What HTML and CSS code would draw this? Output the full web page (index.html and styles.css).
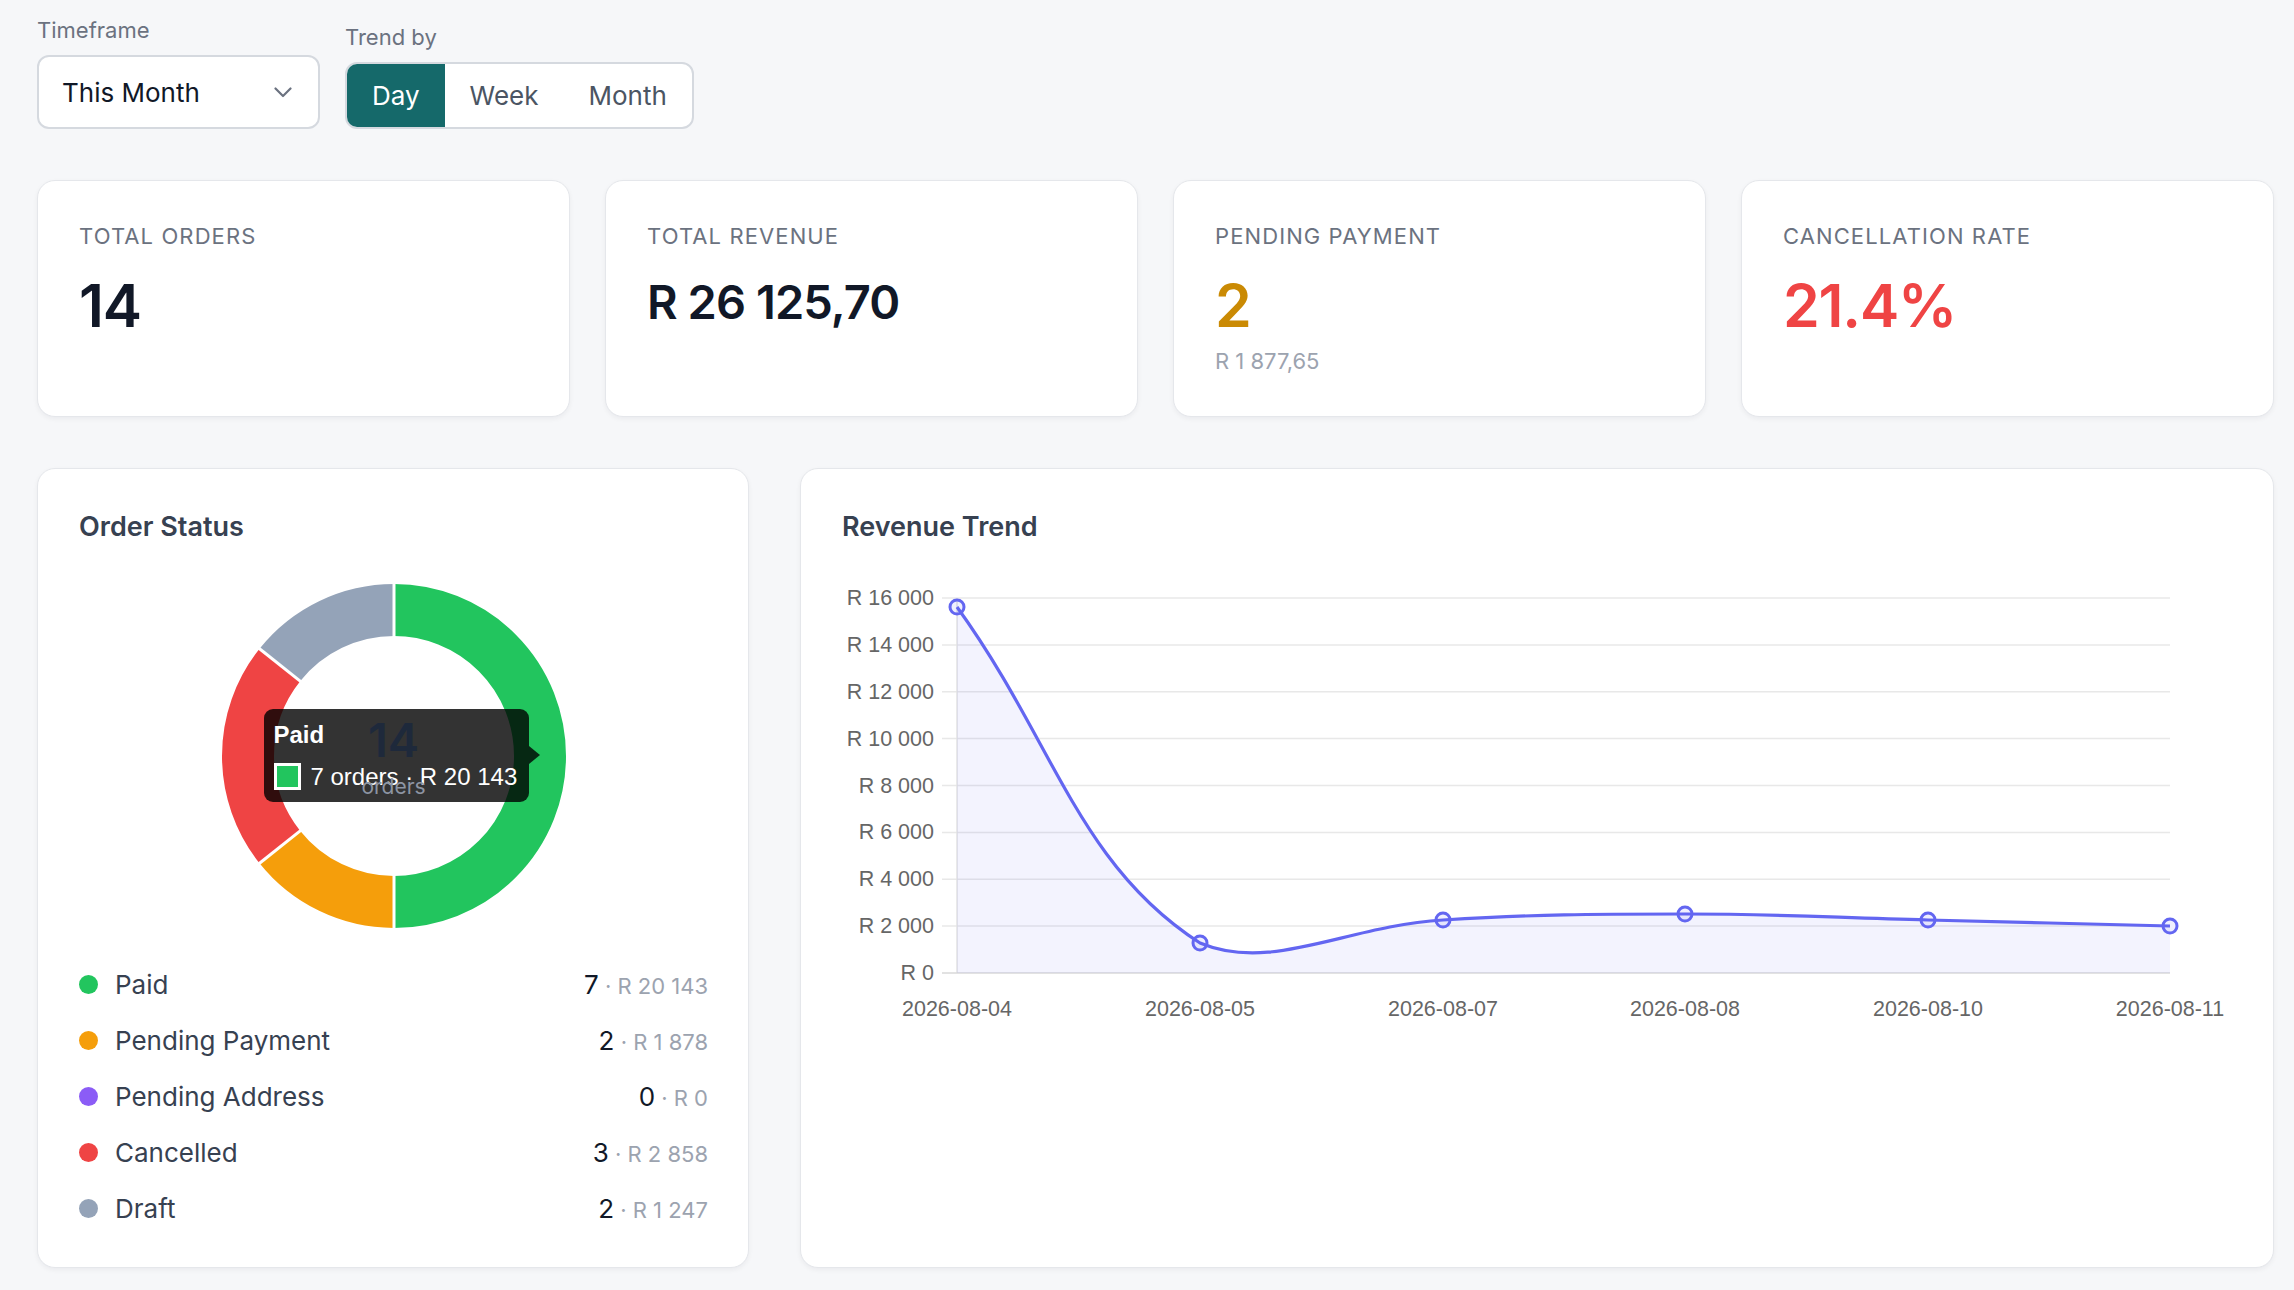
FILE: index.html
```html
<!DOCTYPE html>
<html lang="en">
<head>
    <meta charset="UTF-8">
    <meta name="viewport" content="width=device-width, initial-scale=1.0">
    <title>Orders Dashboard</title>
    <link rel="stylesheet" href="styles.css">
</head>
<body>
    <div class="page">
        <div class="toolbar">
            <div class="field">
                <span class="field-label">Timeframe</span>
                <div class="select">
                    <span>This Month</span>
                    <svg width="18" height="11" viewBox="0 0 18 11"><polyline points="1.5,1.5 9,9 16.5,1.5" fill="none" stroke="#6b7280" stroke-width="2.2" stroke-linecap="round" stroke-linejoin="round"/></svg>
                </div>
            </div>
            <div class="field">
                <span class="field-label">Trend by</span>
                <div class="seg">
                    <button class="active">Day</button>
                    <button>Week</button>
                    <button>Month</button>
                </div>
            </div>
        </div>

        <div class="stats">
            <div class="card stat">
                <div class="stat-label">Total Orders</div>
                <div class="stat-value">14</div>
            </div>
            <div class="card stat">
                <div class="stat-label">Total Revenue</div>
                <div class="stat-value money">R 26 125,70</div>
            </div>
            <div class="card stat">
                <div class="stat-label">Pending Payment</div>
                <div class="stat-value amber">2</div>
                <div class="stat-sub">R 1 877,65</div>
            </div>
            <div class="card stat">
                <div class="stat-label">Cancellation Rate</div>
                <div class="stat-value red">21.4%</div>
            </div>
        </div>

        <div class="panels">
            <div class="card panel">
                <h3>Order Status</h3>
                <div class="donut">
                    <svg width="344" height="344" viewBox="-172 -172 344 344">
                        <g transform="rotate(-90)" fill="none" stroke-width="52">
                            <circle r="146" stroke="#22c55e" stroke-dasharray="458.67 917.35" stroke-dashoffset="0"/>
                            <circle r="146" stroke="#f59e0b" stroke-dasharray="131.05 917.35" stroke-dashoffset="-458.67"/>
                            <circle r="146" stroke="#ef4444" stroke-dasharray="196.57 917.35" stroke-dashoffset="-589.72"/>
                            <circle r="146" stroke="#94a3b8" stroke-dasharray="131.05 917.35" stroke-dashoffset="-786.29"/>
                        </g>
                        <g stroke="#fff" stroke-width="3">
                            <line x1="0" y1="-118" x2="0" y2="-174"/>
                            <line x1="0" y1="118" x2="0" y2="174"/>
                            <line x1="-92.25" y1="73.57" x2="-136.03" y2="108.49"/>
                            <line x1="-92.25" y1="-73.57" x2="-136.03" y2="-108.49"/>
                        </g>
                    </svg>
                    <div class="tooltip">
                        <div class="tooltip-title">Paid</div>
                        <div class="tooltip-row"><span class="tooltip-swatch"></span>7 orders · R 20 143</div>
                    </div>
                    <div class="donut-center">
                        <div class="donut-total">14</div>
                        <div class="donut-caption">orders</div>
                    </div>
                </div>
                <div class="legend">
                    <div class="legend-row">
                        <span class="legend-name"><i class="dot" style="background:#22c55e"></i>Paid</span>
                        <span><b>7</b><small> · R 20 143</small></span>
                    </div>
                    <div class="legend-row">
                        <span class="legend-name"><i class="dot" style="background:#f59e0b"></i>Pending Payment</span>
                        <span><b>2</b><small> · R 1 878</small></span>
                    </div>
                    <div class="legend-row">
                        <span class="legend-name"><i class="dot" style="background:#8b5cf6"></i>Pending Address</span>
                        <span><b>0</b><small> · R 0</small></span>
                    </div>
                    <div class="legend-row">
                        <span class="legend-name"><i class="dot" style="background:#ef4444"></i>Cancelled</span>
                        <span><b>3</b><small> · R 2 858</small></span>
                    </div>
                    <div class="legend-row">
                        <span class="legend-name"><i class="dot" style="background:#94a3b8"></i>Draft</span>
                        <span><b>2</b><small> · R 1 247</small></span>
                    </div>
                </div>
            </div>

            <div class="card panel">
                <h3>Revenue Trend</h3>
                <svg class="trend" width="1390" height="470" viewBox="842 560 1390 470">
                    <g stroke="#e8e8e8" stroke-width="1.5">
                        <line x1="942" y1="598" x2="2170" y2="598"/>
                        <line x1="942" y1="644.9" x2="2170" y2="644.9"/>
                        <line x1="942" y1="691.8" x2="2170" y2="691.8"/>
                        <line x1="942" y1="738.6" x2="2170" y2="738.6"/>
                        <line x1="942" y1="785.5" x2="2170" y2="785.5"/>
                        <line x1="942" y1="832.4" x2="2170" y2="832.4"/>
                        <line x1="942" y1="879.3" x2="2170" y2="879.3"/>
                        <line x1="942" y1="926.1" x2="2170" y2="926.1"/>
                    </g>
                    <line x1="957" y1="598" x2="957" y2="973" stroke="#e2e2e2" stroke-width="1.5"/>
                    <line x1="942" y1="973" x2="2170" y2="973" stroke="#d9d9d9" stroke-width="1.5"/>
                    <path d="M957,607 C1054.2,741.4 1077.6,864.2 1200,943 C1272,973 1345.6,925.8 1443,920 C1539.6,914.2 1588.2,914 1685,914 C1782.2,914 1830.8,917.6 1928,920 C2024.8,922.4 2073.2,923.6 2170,926 L2170,973 L957,973 Z" fill="rgba(99,102,241,0.08)"/>
                    <path d="M957,607 C1054.2,741.4 1077.6,864.2 1200,943 C1272,973 1345.6,925.8 1443,920 C1539.6,914.2 1588.2,914 1685,914 C1782.2,914 1830.8,917.6 1928,920 C2024.8,922.4 2073.2,923.6 2170,926" fill="none" stroke="#6366f1" stroke-width="3.2"/>
                    <g fill="rgba(99,102,241,0.1)" stroke="#6366f1" stroke-width="3">
                        <circle cx="957" cy="607" r="7"/>
                        <circle cx="1200" cy="943" r="7"/>
                        <circle cx="1443" cy="920" r="7"/>
                        <circle cx="1685" cy="914" r="7"/>
                        <circle cx="1928" cy="920" r="7"/>
                        <circle cx="2170" cy="926" r="7"/>
                    </g>
                    <g class="axis-y" text-anchor="end">
                        <text x="934" y="598">R 16 000</text>
                        <text x="934" y="644.9">R 14 000</text>
                        <text x="934" y="691.8">R 12 000</text>
                        <text x="934" y="738.6">R 10 000</text>
                        <text x="934" y="785.5">R 8 000</text>
                        <text x="934" y="832.4">R 6 000</text>
                        <text x="934" y="879.3">R 4 000</text>
                        <text x="934" y="926.1">R 2 000</text>
                        <text x="934" y="973">R 0</text>
                    </g>
                    <g class="axis-x" text-anchor="middle">
                        <text x="957" y="1009">2026-08-04</text>
                        <text x="1200" y="1009">2026-08-05</text>
                        <text x="1443" y="1009">2026-08-07</text>
                        <text x="1685" y="1009">2026-08-08</text>
                        <text x="1928" y="1009">2026-08-10</text>
                        <text x="2170" y="1009">2026-08-11</text>
                    </g>
                </svg>
            </div>
        </div>
    </div>
</body>
</html>
```

FILE: styles.css
```css
* {
    box-sizing: border-box;
}
body {
    margin: 0;
    background: #f6f7f9;
    font-family: 'Inter', 'Noto Sans', sans-serif;
    color: #111827;
}
.page {
    padding: 15px 20px 40px 37px;
}
.toolbar {
    display: flex;
    align-items: flex-end;
    gap: 25px;
}
.field {
    display: flex;
    flex-direction: column;
}
.field-label {
    font-size: 22px;
    line-height: 30px;
    color: #6b7280;
    margin-bottom: 10px;
}
.select {
    width: 283px;
    height: 74px;
    background: #fff;
    border: 2px solid #d5d9df;
    border-radius: 12px;
    padding: 0 26px 0 23px;
    display: flex;
    align-items: center;
    justify-content: space-between;
    font-size: 26px;
    color: #111827;
}
.seg {
    display: flex;
    height: 67px;
    background: #fff;
    border: 2px solid #d5d9df;
    border-radius: 12px;
    overflow: hidden;
}
.seg button {
    font-family: inherit;
    font-size: 26px;
    color: #4b5563;
    background: none;
    border: none;
    padding: 0 25px;
    cursor: pointer;
}
.seg button.active {
    background: #15696a;
    color: #fff;
}
.card {
    background: #fff;
    border: 1.5px solid #e5e7eb;
    border-radius: 18px;
    box-shadow: 0 2px 5px rgba(15, 23, 42, 0.05);
}
.stats {
    display: grid;
    grid-template-columns: repeat(4, 1fr);
    gap: 35px;
    margin-top: 51px;
}
.stat {
    height: 237px;
    padding: 40px 41px;
}
.stat-label {
    font-size: 22px;
    line-height: 30px;
    letter-spacing: 0.05em;
    text-transform: uppercase;
    color: #6b7280;
}
.stat-value {
    margin-top: 19px;
    font-size: 59px;
    line-height: 71px;
    font-weight: 600;
    letter-spacing: -0.02em;
    color: #111827;
}
.stat-value.money {
    font-size: 47px;
    line-height: 64px;
}
.stat-value.amber {
    color: #ca8a04;
}
.stat-value.red {
    color: #ef4444;
}
.stat-sub {
    margin-top: 5px;
    font-size: 22px;
    line-height: 30px;
    color: #9ca3af;
}
.panels {
    display: grid;
    grid-template-columns: 712px 1fr;
    gap: 51px;
    margin-top: 51px;
}
.panel {
    height: 800px;
    padding: 40px 40px 40px 41px;
}
.panel h3 {
    margin: 0;
    font-size: 27px;
    line-height: 35px;
    font-weight: 600;
    color: #374151;
}
.donut {
    position: relative;
    width: 344px;
    height: 344px;
    margin: 39.5px auto 0;
}
.donut svg {
    display: block;
}
.tooltip {
    position: absolute;
    left: 42px;
    top: 125px;
    padding: 12px 12px 11px 10px;
    background: rgba(0, 0, 0, 0.8);
    border-radius: 9px;
    color: #fff;
    font-family: 'Liberation Sans', Arial, sans-serif;
    white-space: nowrap;
}
.tooltip::after {
    content: '';
    position: absolute;
    right: -11px;
    top: 50%;
    margin-top: -9px;
    border-left: 11px solid rgba(0, 0, 0, 0.8);
    border-top: 9px solid transparent;
    border-bottom: 9px solid transparent;
}
.tooltip-title {
    font-size: 24px;
    line-height: 28px;
    font-weight: 700;
}
.tooltip-row {
    display: flex;
    align-items: center;
    height: 28px;
    margin-top: 14px;
    font-size: 24px;
}
.tooltip-swatch {
    width: 27px;
    height: 27px;
    background: #22c55e;
    border: 3px solid #fff;
    margin-right: 10px;
}
.donut-center {
    position: absolute;
    left: 0;
    right: 0;
    top: 131px;
    text-align: center;
    pointer-events: none;
}
.donut-total {
    font-size: 47px;
    line-height: 50px;
    font-weight: 600;
    color: #1e293b;
}
.donut-caption {
    margin-top: 9px;
    font-size: 21px;
    line-height: 26px;
    color: #8d95a3;
}
.legend {
    margin-top: 29px;
}
.legend-row {
    height: 56px;
    display: flex;
    align-items: center;
    justify-content: space-between;
    font-size: 26px;
}
.legend-name {
    display: flex;
    align-items: center;
    color: #374151;
}
.dot {
    width: 19px;
    height: 19px;
    border-radius: 50%;
    margin-right: 17px;
}
.legend-row b {
    font-weight: 400;
    color: #111827;
}
.legend-row small {
    font-size: 22px;
    color: #9ca3af;
}
.trend {
    display: block;
    margin-top: 15.5px;
}
.trend text {
    font-family: 'Liberation Sans', Arial, sans-serif;
    font-size: 21.5px;
    fill: #666;
    dominant-baseline: central;
}
```
